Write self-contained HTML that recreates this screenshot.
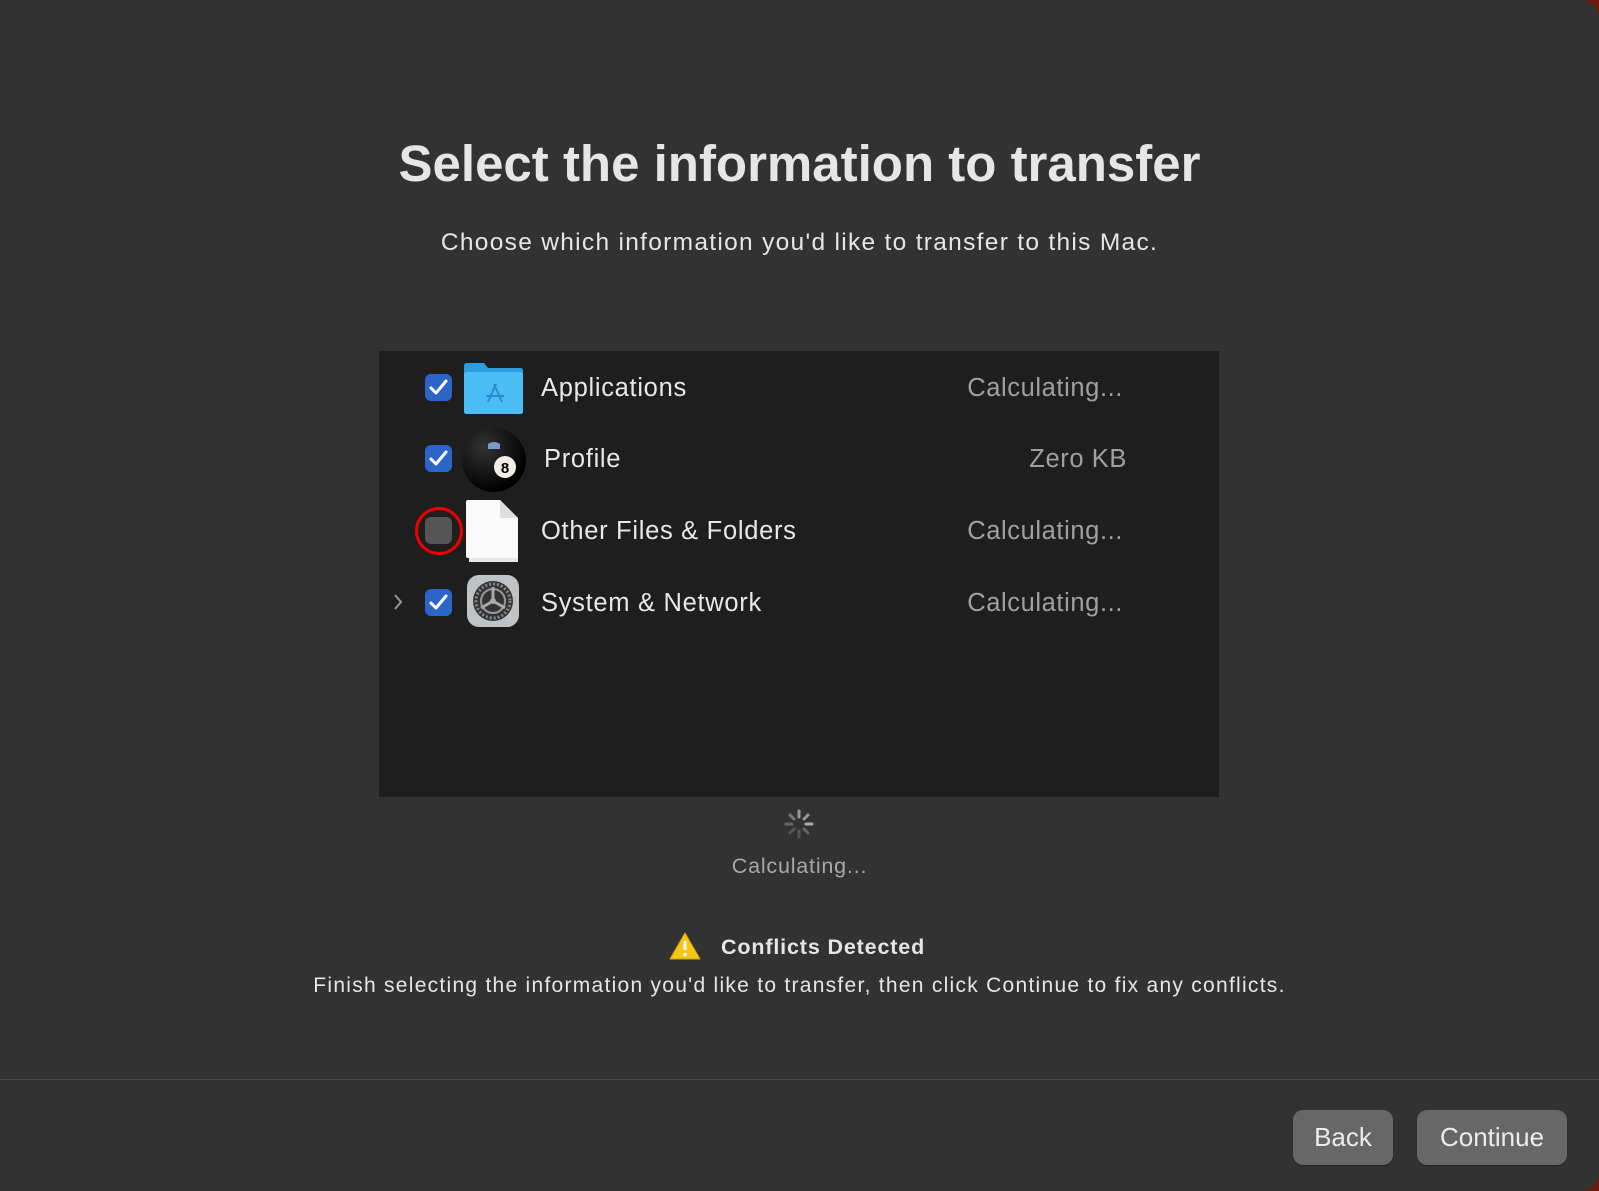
<!DOCTYPE html>
<html><head><meta charset="utf-8"><style>
html,body{margin:0;padding:0;width:1599px;height:1191px;overflow:hidden;background:#6a1a0c;}
body{font-family:"Liberation Sans",sans-serif;}
.win{position:absolute;left:0;top:0;width:1599px;height:1191px;background:#323232;border-radius:0 18px 18px 0;overflow:hidden;}
.t{position:absolute;left:0;width:1599px;text-align:center;color:#e6e6e6;}
.list{position:absolute;left:379px;top:351px;width:840px;height:446px;background:#1e1e1e;}
.row{position:absolute;left:0;width:840px;height:60px;}
.cb{position:absolute;left:46px;width:27px;height:27px;border-radius:6px;background:#2d64c8;top:16px;}
.cb svg{position:absolute;left:4px;top:5px;}
.lab{position:absolute;left:162px;top:16px;font-size:25.5px;color:#e8e8e8;letter-spacing:0.7px;}
.sz{position:absolute;right:96px;top:16px;font-size:25.5px;color:#a0a0a0;letter-spacing:0.6px;}
.ic{position:absolute;left:85px;top:0;}
.btn{position:absolute;top:1110px;height:55px;background:#676767;border-radius:10px;color:#ececec;font-size:26px;text-align:center;line-height:55px;box-shadow:0 1px 1px rgba(0,0,0,.4);}
</style></head><body><div class="win">
<div class="t" style="top:134px;font-size:51px;font-weight:bold;">Select the information to transfer</div>
<div class="t" style="top:229px;font-size:24.5px;letter-spacing:1.3px;">Choose which information you'd like to transfer to this Mac.</div>
<div class="list">
 <div class="row" style="top:7px">
  <div class="cb"><svg width="19" height="17" viewBox="0 0 19 17"><path d="M2 9 L7 14 L17 2" stroke="#fff" stroke-width="3" fill="none" stroke-linecap="round" stroke-linejoin="round"/></svg></div>
  <svg class="ic" width="60" height="60" viewBox="0 0 60 60"><path d="M0 8 Q0 5 3 5 H20 L24 10 H57 Q59 10 59 13 V54 Q59 56 57 56 H3 Q0 56 0 54Z" fill="#2a9ee0"/><rect x="0" y="14" width="59" height="42" rx="3" fill="#4cbcf5"/><g stroke="#2a8cd0" stroke-width="2" fill="none"><path d="M24 44 L32 26 M38 44 L30 26 M22 38 H40"/></g></svg>
  <div class="lab">Applications</div><div class="sz">Calculating...</div>
 </div>
 <div class="row" style="top:78px">
  <div class="cb"><svg width="19" height="17" viewBox="0 0 19 17"><path d="M2 9 L7 14 L17 2" stroke="#fff" stroke-width="3" fill="none" stroke-linecap="round" stroke-linejoin="round"/></svg></div>
  <svg class="ic" style="left:82px;top:-2px" width="66" height="66" viewBox="0 0 66 66"><defs><radialGradient id="g" cx="35%" cy="30%" r="70%"><stop offset="0" stop-color="#333"/><stop offset="1" stop-color="#000"/></radialGradient></defs><circle cx="33" cy="33" r="32" fill="url(#g)"/><path d="M27 17 Q33 13 39 17 L39 22 H27Z" fill="#7a9acb"/><circle cx="44" cy="40" r="11" fill="#f2eee6"/><text x="44" y="46" font-size="15" font-weight="bold" text-anchor="middle" font-family="Liberation Sans">8</text></svg>
  <div class="lab" style="left:165px">Profile</div><div class="sz" style="right:92px">Zero KB</div>
 </div>
 <div class="row" style="top:150px">
  <div class="cb" style="background:#555;"></div>
  <div style="position:absolute;left:36px;top:6px;width:42px;height:42px;border:3px solid #e00;border-radius:50%;"></div>
  <svg class="ic" width="60" height="64" viewBox="0 0 60 64" style="top:-3px"><path d="M5 8 H36 L54 26 V64 H5Z" fill="#e8e8e8"/><path d="M2 4 Q2 2 4 2 H36 L54 20 V58 Q54 60 52 60 H4 Q2 60 2 58Z" fill="#fafafa"/><path d="M36 2 V18 Q36 20 38 20 H54Z" fill="#ddd"/></svg>
  <div class="lab">Other Files &amp; Folders</div><div class="sz">Calculating...</div>
 </div>
 <div class="row" style="top:222px">
  <svg style="position:absolute;left:13px;top:20px" width="12" height="18"><path d="M3 2 L9 9 L3 16" stroke="#999" stroke-width="2" fill="none"/></svg>
  <div class="cb"><svg width="19" height="17" viewBox="0 0 19 17"><path d="M2 9 L7 14 L17 2" stroke="#fff" stroke-width="3" fill="none" stroke-linecap="round" stroke-linejoin="round"/></svg></div>
  <svg class="ic" style="left:88px;top:2px" width="52" height="52" viewBox="0 0 52 52"><rect width="52" height="52" rx="12" fill="#bfc3c6"/><circle cx="26" cy="26" r="20" fill="#333"/><circle cx="26" cy="26" r="17" fill="none" stroke="#888" stroke-width="3" stroke-dasharray="2 2"/><circle cx="26" cy="26" r="12" fill="none" stroke="#999" stroke-width="2"/><path d="M26 26 V12 M26 26 L14 33 M26 26 L38 33" stroke="#aaa" stroke-width="3"/><circle cx="26" cy="26" r="3" fill="#aaa"/></svg>
  <div class="lab">System &amp; Network</div><div class="sz">Calculating...</div>
 </div>
</div>
<svg style="position:absolute;left:783px;top:808px" width="32" height="32" viewBox="0 0 32 32"><g stroke-width="3" stroke-linecap="round"><path d="M16 3 V9" stroke="#999"/><path d="M25 7 L21 11" stroke="#999"/><path d="M29 16 H23" stroke="#aaa"/><path d="M25 25 L21 21" stroke="#666"/><path d="M16 29 V23" stroke="#555"/><path d="M7 25 L11 21" stroke="#555"/><path d="M3 16 H9" stroke="#666"/><path d="M7 7 L11 11" stroke="#777"/></g></svg>
<div class="t" style="top:854px;font-size:21.5px;color:#a8a8a8;letter-spacing:0.8px;">Calculating...</div>
<svg style="position:absolute;left:669px;top:932px" width="32" height="28" viewBox="0 0 32 28"><path d="M16 1 L31 27 H1Z" fill="#f5c518" stroke="#d9a400" stroke-linejoin="round"/><path d="M16 9 V18" stroke="#fff" stroke-width="3"/><circle cx="16" cy="22.5" r="1.7" fill="#fff"/></svg>
<div style="position:absolute;left:721px;top:935px;font-size:21.5px;font-weight:bold;color:#e6e6e6;letter-spacing:0.85px;">Conflicts Detected</div>
<div class="t" style="top:974px;font-size:21px;letter-spacing:1.27px;">Finish selecting the information you'd like to transfer, then click Continue to fix any conflicts.</div>
<div style="position:absolute;left:0;top:1079px;width:1599px;height:1px;background:#4a4a4a;"></div>
<div class="btn" style="left:1293px;width:100px;">Back</div>
<div class="btn" style="left:1417px;width:150px;">Continue</div>
</div></body></html>
